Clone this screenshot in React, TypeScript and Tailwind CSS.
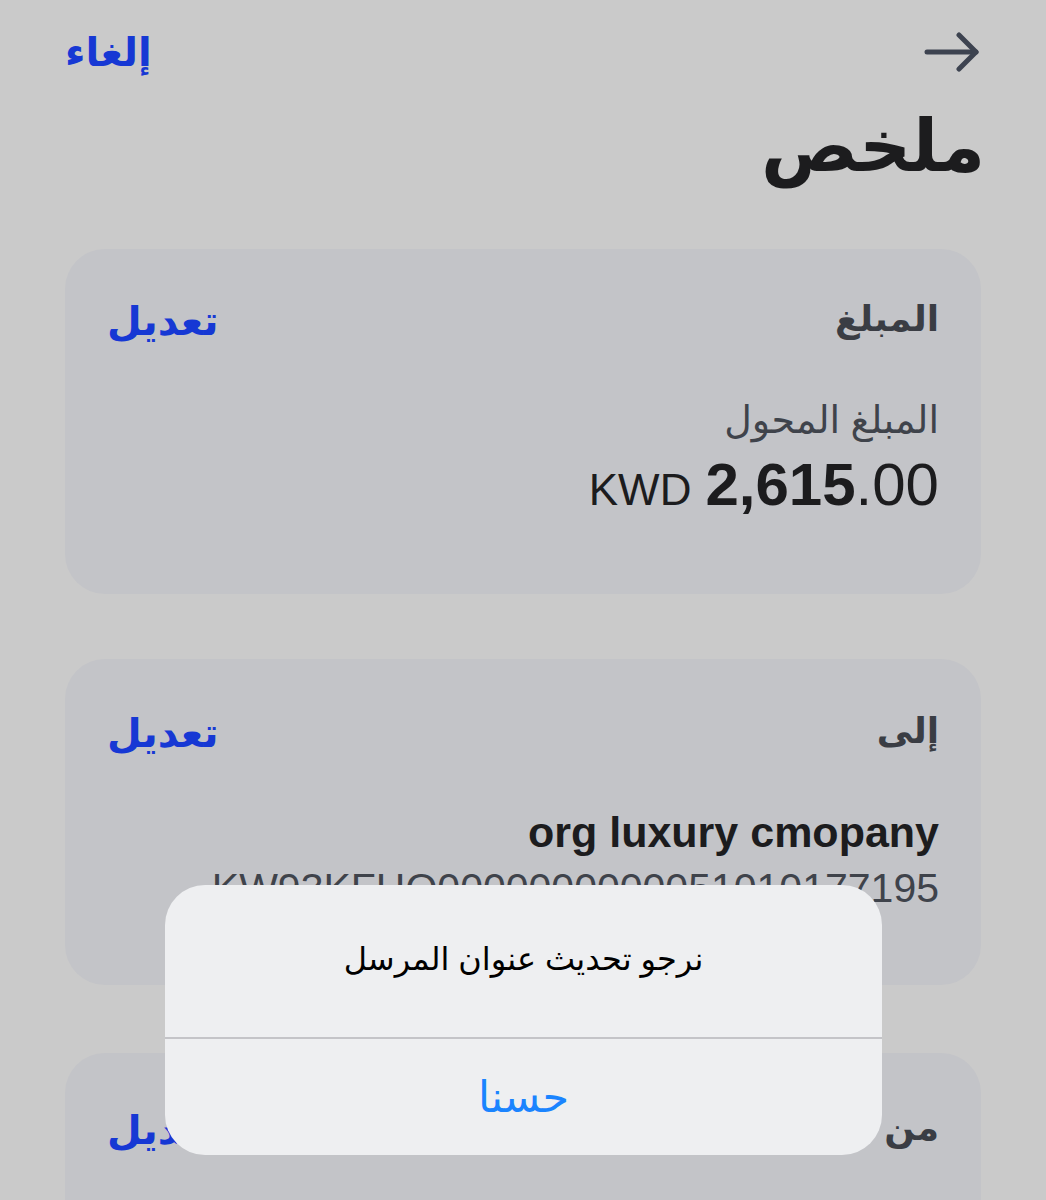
import { ReactNode } from "react"

const font = { fontFamily: '"Liberation Sans", "DejaVu Sans", sans-serif' }

function BackArrow() {
  return (
    <svg width="56" height="40" viewBox="0 0 56 40" fill="none" stroke="#3d4350" strokeWidth="5" strokeLinecap="round" strokeLinejoin="round">
      <path d="M3 20H52" />
      <path d="M35 3L52 20L35 37" />
    </svg>
  )
}

function Card({ label, children, className }: { label: string; children?: ReactNode; className?: string }) {
  return (
    <div className={`rounded-[40px] bg-[#c3c4c8] px-[42px] ${className ?? ""}`}>
      <div className="flex items-start justify-between">
        <span className="text-[36px] font-semibold leading-none text-[#3a3d44]">{label}</span>
        <button className="text-[40px] font-bold leading-none text-[#1638d4]">تعديل</button>
      </div>
      {children}
    </div>
  )
}

export default function App() {
  return (
    <div dir="rtl" style={font} className="relative h-[1200px] w-[1046px] overflow-hidden bg-[#cacaca]">
      <div className="px-[65px]">
        {/* top bar */}
        <div className="flex items-center justify-between pt-[32px] pr-[1px]">
          <BackArrow />
          <button className="text-[40px] font-bold leading-none text-[#1638d4]">إلغاء</button>
        </div>

        <h1 className="mt-[38px] -mr-[4px] text-[72px] font-bold leading-none text-[#1c1c1e]">ملخص</h1>

        <Card label="المبلغ" className="mt-[67px] h-[345px] pt-[52px]">
          <div className="mt-[60px] text-[38px] leading-none text-[#3f434b]">المبلغ المحول</div>
          <div dir="ltr" className="mt-[16px] flex items-baseline justify-end text-[#1c1c1e]">
            <span className="mr-[14px] text-[44px]">KWD</span>
            <span className="text-[60px] font-bold leading-none">2,615</span>
            <span className="text-[60px] leading-none">.00</span>
          </div>
        </Card>

        <Card label="إلى" className="mt-[65px] h-[326px] pt-[54px]">
          <div className="mt-[58px] text-[43px] font-bold leading-none text-[#1c1c1e]">org luxury cmopany</div>
          <div dir="ltr" className="mt-[14px] text-right text-[41px] leading-none text-[#3f434b]">KW93KFHO0000000000051010177195</div>
        </Card>

        <Card label="من" className="mt-[68px] h-[300px] pt-[57px]" />
      </div>

      {/* alert */}
      <div className="absolute left-[165px] top-[885px] w-[717px] overflow-hidden rounded-[40px] bg-[#eeeff1]">
        <div className="flex h-[152px] items-center justify-center pb-[4px] text-[32px] text-black">نرجو تحديث عنوان المرسل</div>
        <div className="h-[2px] bg-[#c4c4c8]" />
        <button className="flex h-[116px] w-full items-center justify-center text-[43px] text-[#1a84ff]">حسنا</button>
      </div>
    </div>
  )
}
